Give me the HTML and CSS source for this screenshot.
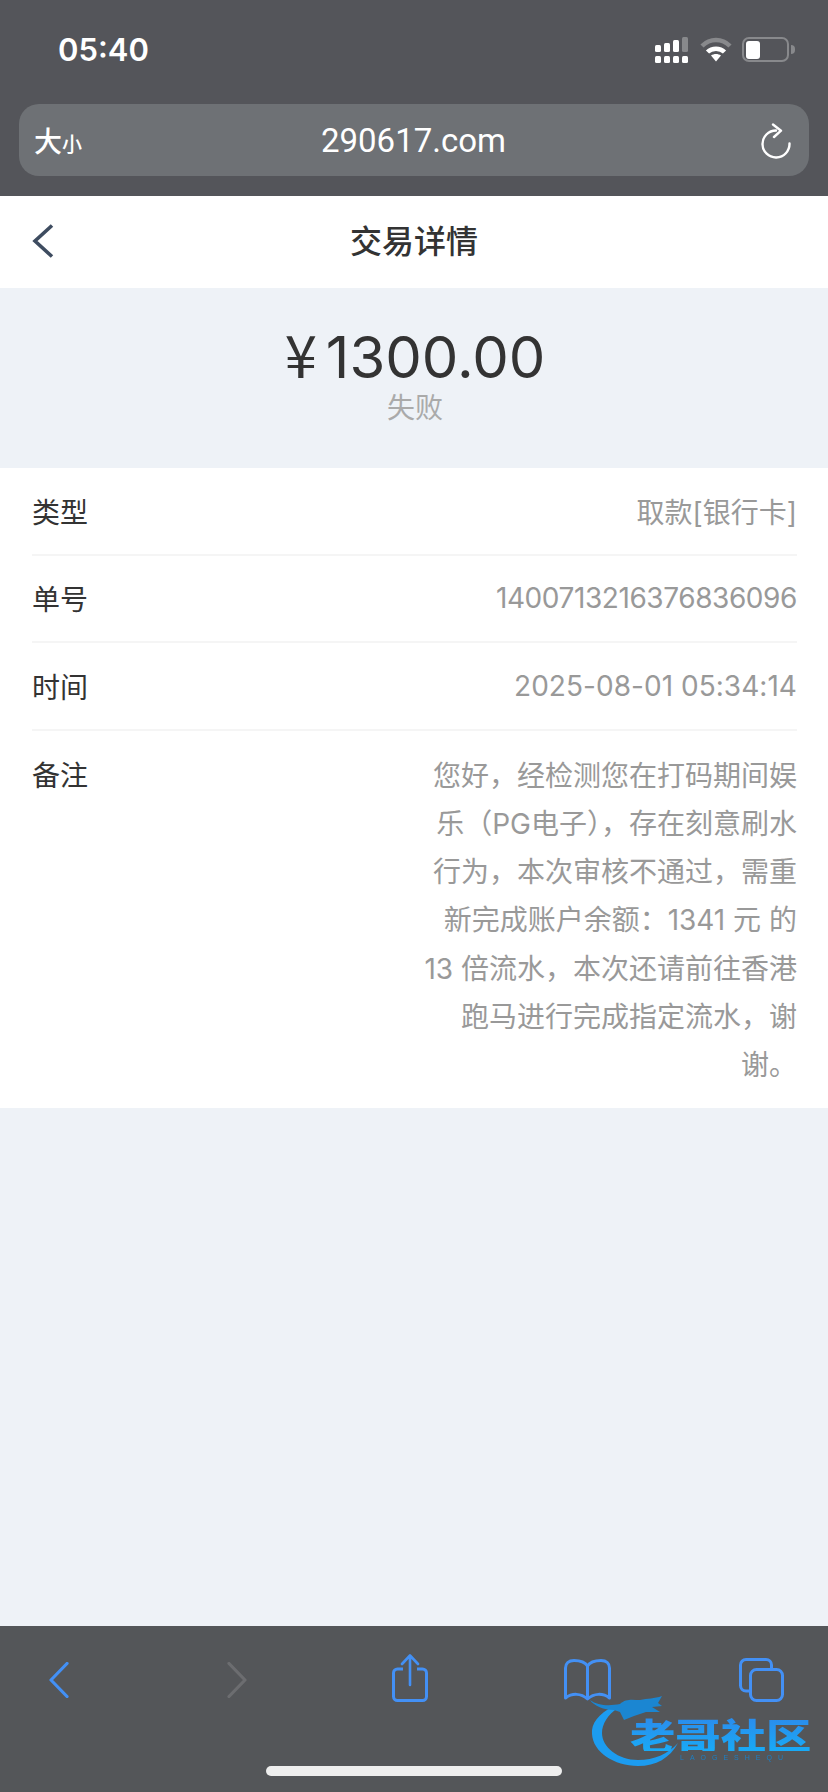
FILE: index.html
```html
<!DOCTYPE html>
<html lang="zh-CN">
<head>
    <meta charset="UTF-8">
    <title>交易详情</title>
    <link rel="stylesheet" href="styles.css">
</head>
<body>

<div class="browser-top">
    <div class="status-bar">
        <span class="clock">05:40</span>
        <div class="status-icons">
            <svg class="signal" width="33" height="26" viewBox="0 0 33 26">
                <rect x="0" y="8" width="6" height="7" rx="1.5" fill="#fff"/>
                <rect x="9" y="6" width="6" height="9" rx="1.5" fill="#fff"/>
                <rect x="18" y="3" width="6" height="12" rx="1.5" fill="#fff"/>
                <rect x="27" y="0" width="6" height="15" rx="1.5" fill="#88898c"/>
                <rect x="0" y="19" width="6" height="7" rx="1.5" fill="#fff"/>
                <rect x="9" y="19" width="6" height="7" rx="1.5" fill="#fff"/>
                <rect x="18" y="19" width="6" height="7" rx="1.5" fill="#fff"/>
                <rect x="27" y="19" width="6" height="7" rx="1.5" fill="#fff"/>
            </svg>
            <svg class="wifi" width="32" height="25" viewBox="0 0 32 25">
                <path d="M2 9 C10 1 22 1 30 9" fill="none" stroke="#88898c" stroke-width="4.5"/>
                <path d="M7.5 15 C12 10.5 20 10.5 24.5 15" fill="none" stroke="#fff" stroke-width="4.5"/>
                <path d="M11 18.5 C14 16.5 18 16.5 21 18.5 L16 24.5 Z" fill="#fff"/>
            </svg>
            <div class="battery">
                <div class="battery-level"></div>
            </div>
            <div class="battery-nub"></div>
        </div>
    </div>
    <div class="url-bar">
        <span class="font-size-btn">大<small>小</small></span>
        <span class="url-text">290617.com</span>
        <svg class="reload" width="32" height="36" viewBox="0 0 32 36">
            <path d="M29.5 20.5 A13.5 13.5 0 1 1 16 7.5" fill="none" stroke="#fff" stroke-width="2.4" stroke-linecap="round"/>
            <path d="M13 1.5 L21 7.7 L14 14" fill="none" stroke="#fff" stroke-width="2.4" stroke-linecap="round" stroke-linejoin="round"/>
        </svg>
    </div>
</div>

<header class="page-header">
    <svg class="back-icon" width="22" height="34" viewBox="0 0 22 34">
        <path d="M20 1.5 L3 17 L20 32.5" fill="none" stroke="#3e4c60" stroke-width="3.6"/>
    </svg>
    <h1>交易详情</h1>
</header>

<main class="page-body">
    <section class="amount-box">
        <div class="amount"><span class="currency">¥</span>1300.00</div>
        <div class="amount-status">失败</div>
    </section>

    <section class="detail-list">
        <div class="detail-row">
            <span class="detail-label">类型</span>
            <span class="detail-value">取款[银行卡]</span>
        </div>
        <div class="detail-row">
            <span class="detail-label">单号</span>
            <span class="detail-value order-no">1400713216376836096</span>
        </div>
        <div class="detail-row">
            <span class="detail-label">时间</span>
            <span class="detail-value trade-time">2025-08-01 05:34:14</span>
        </div>
        <div class="detail-row remark-row">
            <span class="detail-label">备注</span>
            <p class="detail-value remark">您好，经检测您在打码期间娱乐（PG电子），存在刻意刷水行为，本次审核不通过，需重新完成账户余额：1341 元 的 13 倍流水，本次还请前往香港跑马进行完成指定流水，谢谢。</p>
        </div>
    </section>
</main>

<footer class="browser-bottom">
    <div class="toolbar">
        <svg width="20" height="36" viewBox="0 0 20 36">
            <path d="M18 1.5 L2 18 L18 34.5" fill="none" stroke="#4390f5" stroke-width="3.2" stroke-linecap="round" stroke-linejoin="round"/>
        </svg>
        <svg class="forward-icon" width="20" height="36" viewBox="0 0 20 36">
            <path d="M2 1.5 L18 18 L2 34.5" fill="none" stroke="#6c6d70" stroke-width="3.2" stroke-linecap="round" stroke-linejoin="round"/>
        </svg>
        <svg class="share-icon" width="36" height="48" viewBox="0 0 36 48">
            <path d="M11 15 H5.5 A4 4 0 0 0 1.5 19 V42.5 A4 4 0 0 0 5.5 46.5 H30.5 A4 4 0 0 0 34.5 42.5 V19 A4 4 0 0 0 30.5 15 H25" fill="none" stroke="#4390f5" stroke-width="3"/>
            <path d="M18 31 V2 M10 10 L18 1.5 L26 10" fill="none" stroke="#4390f5" stroke-width="2.6" stroke-linecap="round" stroke-linejoin="round"/>
        </svg>
        <svg class="book-icon" width="47" height="42" viewBox="0 0 47 42">
            <path d="M23.5 7 C21 3 16 1.5 10 1.5 C4.5 1.5 1.5 4.5 1.5 9 V39 C8 34 17 34 23.5 40 C30 34 39 34 45.5 39 V9 C45.5 4.5 42.5 1.5 37 1.5 C31 1.5 26 3 23.5 7 Z M23.5 7 V40" fill="none" stroke="#4390f5" stroke-width="3" stroke-linejoin="round"/>
        </svg>
        <svg width="45" height="44" viewBox="0 0 45 44">
            <path d="M11 33 H7 A5.5 5.5 0 0 1 1.5 27.5 V7 A5.5 5.5 0 0 1 7 1.5 H27 A5.5 5.5 0 0 1 32.5 7 V11" fill="none" stroke="#4390f5" stroke-width="3"/>
            <rect x="11.5" y="11.5" width="32" height="31" rx="6" fill="none" stroke="#4390f5" stroke-width="3"/>
        </svg>
    </div>
    <div class="home-indicator"></div>

    <div class="watermark">
        <svg class="watermark-dragon" width="90" height="76" viewBox="0 0 90 76">
            <path d="M24 14 C8 22 1 32 2 42 C3 60 24 74 48 74 C66 74 80 66 88 51 C78 62 64 68 48 68 C28 68 12 55 12 41 C12 32 18 22 28 16 Z" fill="#1c9cf0"/>
            <path d="M0 8 C8 14 20 14 30 12 C36 6 44 8 50 8 C58 6 64 7 72 4 L68 11 L72 14 L62 15 L70 20 L56 20 L44 24 L34 28 L30 20 L24 18 C14 18 4 14 0 8 Z" fill="#1b86d2"/>
        </svg>
        <span class="watermark-name">老哥社区</span>
        <span class="watermark-pinyin">LAOGESHEQU</span>
    </div>
</footer>

</body>
</html>
```

FILE: styles.css
```css
* {
    box-sizing: border-box;
}

body {
    margin: 0;
    height: 1792px;
    display: flex;
    flex-direction: column;
    overflow: hidden;
    font-family: Inter, "Noto Sans CJK SC", sans-serif;
    background-color: #eef2f7;
}

.browser-top {
    height: 196px;
    background-color: #54555a;
    padding: 0 19px;
    color: white;
}

.status-bar {
    height: 104px;
    display: flex;
    justify-content: space-between;
    align-items: flex-start;
}

.clock {
    margin: 29px 0 0 39px;
    font-size: 31px;
    line-height: 42px;
    font-weight: 600;
}

.status-icons {
    display: flex;
    align-items: flex-start;
    margin: 37px 14px 0 0;
}

.wifi {
    margin-left: 12px;
}

.battery {
    width: 47px;
    height: 25px;
    margin-left: 10px;
    padding: 1.5px;
    border: 2px solid #88898c;
    border-radius: 7px;
}

.battery-level {
    width: 14px;
    height: 18px;
    background-color: white;
    border-radius: 3px;
}

.battery-nub {
    width: 4px;
    height: 9px;
    margin: 8px 0 0 2px;
    background-color: #88898c;
    border-radius: 0 4px 4px 0;
}

.url-bar {
    height: 72px;
    background-color: #6e7175;
    border-radius: 20px;
    display: grid;
    grid-template-columns: 1fr auto 1fr;
    align-items: center;
    padding: 0 16px 0 15px;
}

.font-size-btn {
    font-family: "Noto Sans CJK SC", sans-serif;
    font-size: 28px;
    font-weight: 500;
}

.font-size-btn small {
    font-size: 20px;
}

.url-text {
    font-size: 33px;
    font-family: Roboto, sans-serif;
}

.reload {
    justify-self: end;
    margin: 2px 1px 0 0;
}

.page-header {
    height: 92px;
    background-color: white;
    display: grid;
    grid-template-columns: 1fr auto 1fr;
    align-items: center;
    padding: 0 32px 0;
}

.page-header h1 {
    margin: 0 0 7px;
    font-size: 32px;
    font-weight: 500;
    color: #333;
}

.back-icon {
    margin-top: -2px;
}

.page-body {
    flex: 1;
}

.amount-box {
    height: 180px;
    padding-top: 30px;
    padding-left: 2px;
    text-align: center;
}

.amount {
    font-size: 58px;
    line-height: 70px;
    color: #333;
}

.currency {
    font-family: "Noto Sans CJK SC", sans-serif;
    margin-right: 9px;
}

.amount-status {
    font-size: 28px;
    line-height: 33px;
    color: #aaa;
}

.detail-list {
    background-color: white;
    padding: 0 31px 0 32px;
}

.detail-row {
    display: flex;
    justify-content: space-between;
    align-items: center;
    height: 87.5px;
    font-size: 28px;
    border-bottom: 2px solid #f5f5f5;
}

.detail-label {
    color: #333;
}

.detail-value {
    color: #999;
    text-align: right;
}

.order-no {
    letter-spacing: -0.42px;
}

.trade-time {
    letter-spacing: 0.04px;
}

.remark-row {
    height: 377px;
    align-items: flex-start;
    border-bottom: none;
    padding-top: 21px;
}

.remark-row .detail-label {
    line-height: 48.3px;
}

.remark {
    width: 380px;
    margin: 0;
    line-height: 48.3px;
}

.browser-bottom {
    height: 166px;
    background-color: #545659;
    position: relative;
}

.toolbar {
    height: 108px;
    margin-left: -29px;
    display: grid;
    grid-template-columns: repeat(5, 175.6px);
    align-items: center;
    justify-items: center;
}

.forward-icon {
    margin-left: 5px;
}

.share-icon {
    margin-bottom: 4px;
}

.book-icon {
    margin-left: 4px;
}

.home-indicator {
    width: 296px;
    height: 10px;
    margin: 32px auto 0;
    background-color: #eee;
    border-radius: 5px;
}

.watermark {
    position: absolute;
    left: 590px;
    top: 66px;
    width: 226px;
    height: 76px;
    filter: blur(0.6px);
}

.watermark-dragon {
    position: absolute;
    left: 0;
    top: 0;
}

.watermark-name {
    position: absolute;
    left: 40px;
    top: 26px;
    font-family: "Noto Sans CJK SC", sans-serif;
    font-size: 36px;
    line-height: 33px;
    font-weight: 900;
    white-space: nowrap;
    transform: scaleX(1.26);
    transform-origin: left center;
    background: linear-gradient(#2b8cec, #18aaf6);
    -webkit-background-clip: text;
    background-clip: text;
    color: transparent;
}

.watermark-pinyin {
    position: absolute;
    left: 90px;
    top: 62px;
    font-family: "Liberation Sans", sans-serif;
    font-size: 7px;
    line-height: 8px;
    letter-spacing: 6px;
    white-space: nowrap;
    color: #1c7fc4;
}
```
